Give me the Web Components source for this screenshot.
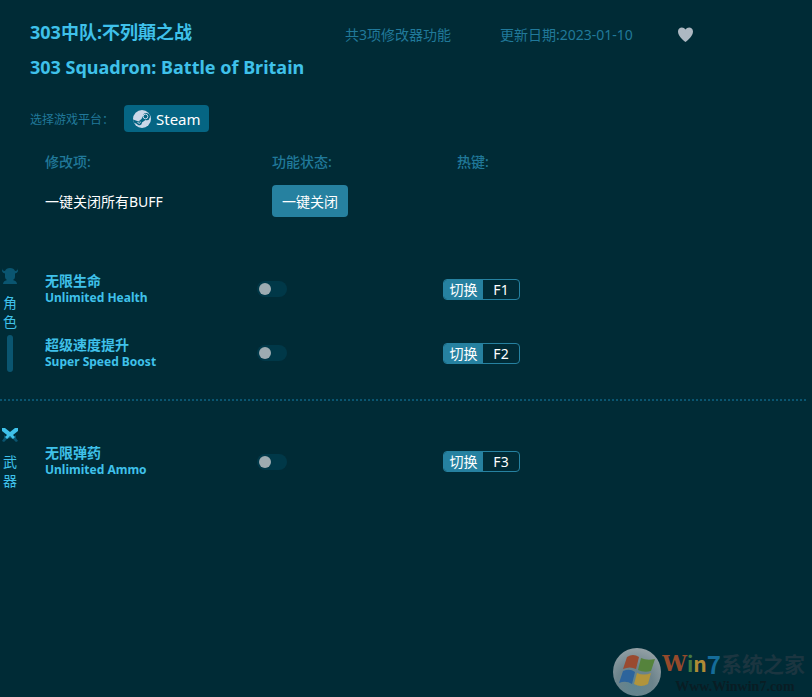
<!DOCTYPE html>
<html lang="zh-CN">
<head>
    <meta charset="UTF-8">
    <title>303中队:不列顛之战</title>
    <style>
        body {
            margin: 0;
            min-height: 100vh;
            background: #002b36;
            color: #3fc1ea;
            font-family: "Noto Sans", "Noto Sans CJK SC", sans-serif;
            font-size: 14px;
            --dim: #20799a;
            --accent: #2681a0;
            --steel: #0a5570;
        }
    </style>
</head>
<body>
<trainer-page>
    <game-header slot="header" count="共3项修改器功能" date="更新日期:2023-01-10">
        <span slot="title">303中队:不列顛之战</span>
        <span slot="subtitle">303 Squadron: Battle of Britain</span>
    </game-header>
    <platform-picker slot="header">Steam</platform-picker>
    <cheat-toolbar slot="header"></cheat-toolbar>

    <cheat-group>
        <svg slot="icon" width="16" height="16" viewBox="0 0 16 16"><path fill="#0a5570" d="M0 0Q0 3 3 3Q4 0 8 0T13 3Q16 3 16 0Q17 5 13 5.500V9Q13 11 11 12Q15 13 15 16H1Q1 13 5 12Q3 11 3 9V5.500Q-1 5 0 0Z"/></svg>
        <span slot="label">角色</span>
        <span slot="bar"></span>
        <cheat-row key="F1">无限生命<span slot="en">Unlimited Health</span></cheat-row>
        <cheat-row key="F2">超级速度提升<span slot="en">Super Speed Boost</span></cheat-row>
    </cheat-group>
    <cheat-group>
        <svg slot="icon" width="16" height="16" viewBox="0 0 16 16">
            <path fill="#0a5570" d="M2 8L5 11L8 9L11 11L14 8L14 11L16 14L14 15L11 12L8 11L5 12L2 15L0 14L2 11Z"/>
            <path fill="#3fc1ea" d="M0 1H3L8 5L13 1H16V4L11 8L13 10L11 12L8 9L5 12L3 10L5 8L0 4Z"/>
        </svg>
        <span slot="label">武器</span>
        <cheat-row key="F3">无限弹药<span slot="en">Unlimited Ammo</span></cheat-row>
    </cheat-group>

    <site-mark slot="mark"></site-mark>
</trainer-page>

<template id="page">
    <style>
        :host { display: block; position: relative; min-height: 100vh; box-sizing: border-box; }
        header { padding: 19px 30px 0; }
        main { padding-top: 40px; }
        ::slotted(site-mark) { position: absolute; right: 7px; bottom: 1px; }
    </style>
    <header><slot name="header"></slot></header>
    <main><slot></slot></main>
    <slot name="mark"></slot>
</template>

<template id="header">
    <style>
        :host { display: flex; align-items: flex-start; }
        .titles { flex: 0 0 315px; white-space: nowrap; }
        h1, h2 { margin: 0 0 9px; font-size: 18px; line-height: 26px; font-weight: bold; }
        .meta { color: var(--dim); line-height: 32px; white-space: nowrap; }
        .count { flex: 0 0 155px; }
        .date { flex: 0 0 178px; }
        button { margin: 8px 0 0; padding: 0; border: 0; background: none; line-height: 0; }
    </style>
    <div class="titles">
        <h1><slot name="title"></slot></h1>
        <h2><slot name="subtitle"></slot></h2>
    </div>
    <span class="meta count"></span>
    <span class="meta date"></span>
    <button aria-label="收藏">
        <svg width="15" height="15" viewBox="0 0 15 15"><path fill="#adb8c2" d="M7.500 15C5 13 0 9 0 4.500C0 0 5.500-1 7.500 2.500C9.500-1 15 0 15 4.500C15 9 10 13 7.500 15Z"/></svg>
    </button>
</template>

<template id="platform">
    <style>
        :host { display: flex; align-items: center; gap: 17px; margin-top: 16px; }
        .caption { width: 77px; color: var(--dim); font-size: 12px; white-space: nowrap; }
        button {
            display: flex; align-items: center; gap: 5px; height: 27px; padding: 0 8px 0 9px;
            border: 0; border-radius: 4px; background: #056583; color: #fff; font: inherit; font-size: 15px; line-height: 24px;
        }
    </style>
    <span class="caption">选择游戏平台：</span>
    <button>
        <svg width="18" height="18" viewBox="0 0 18 18">
            <circle cx="9" cy="9" r="9" fill="#cbd8e9"/>
            <path d="M0 9.500L5.500 11.500L8.500 9L10 6A3.500 3.500 0 1 1 12.500 10L9 12.500A2.700 2.700 0 0 1 4 14L0.700 12.500Z" fill="#056583"/>
            <circle cx="12.500" cy="6.500" r="2.300" fill="none" stroke="#cbd8e9" stroke-width="1"/>
            <path d="M4.500 12.500L6.500 13.300A1.200 1.200 0 0 0 7 11.500" fill="none" stroke="#cbd8e9" stroke-width="1"/>
        </svg>
        <slot></slot>
    </button>
</template>

<template id="toolbar">
    <style>
        :host {
            display: grid; grid-template-columns: 227px 185px 1fr; align-items: center;
            margin: 19px 0 0 15px; row-gap: 13px;
        }
        .head { color: var(--dim); font-size: 14px; font-weight: 500; line-height: 21px; }
        .all { color: #fff; }
        button {
            justify-self: start; height: 32px; padding: 0 10px; border: 0; border-radius: 4px;
            background: var(--accent); color: #fff; font: inherit;
        }
    </style>
    <span class="head">修改项:</span>
    <span class="head">功能状态:</span>
    <span class="head">热键:</span>
    <span class="all">一键关闭所有BUFF</span>
    <button>一键关闭</button>
</template>

<template id="group">
    <style>
        :host { display: flex; align-items: center; }
        :host(:not(:last-of-type)) {
            padding-bottom: 14px;
        }
        :host(:not(:first-of-type)) {
            padding-top: 28px;
            margin-right: 6px;
            background: repeating-linear-gradient(90deg, var(--steel) 0 2px, transparent 2px 4px) 0 0 / 100% 2px no-repeat;
        }
        .side {
            display: flex; flex-direction: column; align-items: center;
            flex: 0 0 20px; padding-bottom: 2px;
        }
        .label { width: 14px; margin: 9px 0 4px; line-height: 19px; word-break: break-all; }
        .rows { flex: 1; }
        ::slotted([slot=icon]) { display: block; }
        ::slotted([slot=bar]) { width: 6px; height: 37px; border-radius: 3px; background: var(--steel); }
    </style>
    <div class="side">
        <slot name="icon"></slot>
        <div class="label"><slot name="label"></slot></div>
        <slot name="bar"></slot>
    </div>
    <div class="rows"><slot></slot></div>
</template>

<template id="row">
    <style>
        :host {
            display: grid; grid-template-columns: 212px 186px 1fr; align-items: center;
            height: 64px; padding-left: 25px;
        }
        label { display: block; font-weight: bold; line-height: 17px; }
        small { display: block; font-size: 12px; line-height: 18px; }
        input {
            appearance: none; width: 30px; height: 16px; margin: 0; padding: 2px;
            border-radius: 8px; background: #003848;
        }
        input::before { content: ""; display: block; width: 12px; height: 12px; border-radius: 50%; background: #9dabb1; }
        input:checked::before { margin-left: auto; background: #3fc1ea; }
        button {
            display: flex; justify-self: start; padding: 0; border: 1px solid var(--accent); border-radius: 4px;
            background: none; color: #fff; font: inherit; line-height: 19px; overflow: hidden;
        }
        .mode { width: 39px; background: var(--accent); }
        .key { width: 36px; }
    </style>
    <label for="on"><slot></slot><small><slot name="en"></slot></small></label>
    <input id="on" type="checkbox" role="switch">
    <button><span class="mode">切换</span><span class="key"></span></button>
</template>

<template id="mark">
    <style>
        :host { display: flex; align-items: center; white-space: nowrap; font-weight: bold; color: #1b3540; }
        .name { display: flex; align-items: center; height: 29px; font: bold 21px/29px "Noto Sans CJK SC", sans-serif; }
        .w { font: bold 22px/29px "DejaVu Serif", serif; color: #964a2b; }
        .i { color: #447b43; }
        .n { color: #b08b35; }
        .seven { color: #156c99; font-size: 24px; }
        .url { font: bold 14px/18px "Liberation Serif", serif; color: #091d24; padding-left: 13px; }
    </style>
    <svg width="49" height="48" viewBox="0 0 49 48">
        <defs>
            <radialGradient id="orb" cx="45%" cy="75%" r="75%">
                <stop offset="0" stop-color="#5c8490"/>
                <stop offset="0.500" stop-color="#6c838b"/>
                <stop offset="1" stop-color="#93a0a5"/>
            </radialGradient>
        </defs>
        <circle cx="24" cy="24" r="24" fill="url(#orb)"/>
        <path fill="#9a4a30" d="M14 9Q20 5 26 9L23 21Q17 18 10 21Z"/>
        <path fill="#55833c" d="M28 10Q34 13 42 11L38 23Q31 25 25 22Z"/>
        <path fill="#2d649c" d="M10 23Q17 20 22 24L19 36Q13 32 6 35Z"/>
        <path fill="#b1943c" d="M24 25Q31 28 38 25L35 36Q28 40 21 36Z"/>
    </svg>
    <div>
        <div class="name"><span class="w">W</span><span class="i">i</span><span class="n">n</span><span class="seven">7</span><span>系统之家</span></div>
        <div class="url">Www.Winwin7.com</div>
    </div>
</template>

<script>
    // every element stamps its own template into an open shadow root
    class Stamped extends HTMLElement {
        constructor(id) {
            super();
            const t = document.getElementById(id);
            this.attachShadow({mode: 'open'}).appendChild(t.content.cloneNode(true));
        }
    }

    customElements.define('trainer-page', class extends Stamped {
        constructor() { super('page'); }
    });

    customElements.define('game-header', class extends Stamped {
        constructor() { super('header'); }
        connectedCallback() {
            this.shadowRoot.querySelector('.count').textContent = this.getAttribute('count');
            this.shadowRoot.querySelector('.date').textContent = this.getAttribute('date');
        }
    });

    customElements.define('platform-picker', class extends Stamped {
        constructor() { super('platform'); }
    });

    customElements.define('cheat-group', class extends Stamped {
        constructor() { super('group'); }
    });

    customElements.define('cheat-row', class extends Stamped {
        constructor() { super('row'); }
        connectedCallback() {
            const root = this.shadowRoot;
            root.querySelector('.key').textContent = this.getAttribute('key');
            // the hotkey button flips the switch
            root.querySelector('button').onclick = () => root.querySelector('input').click();
        }
    });

    customElements.define('cheat-toolbar', class extends Stamped {
        constructor() { super('toolbar'); }
        connectedCallback() {
            this.shadowRoot.querySelector('button').onclick = () => {
                document.querySelectorAll('cheat-row').forEach(row => {
                    row.shadowRoot.querySelector('input').checked = false;
                });
            };
        }
    });

    customElements.define('site-mark', class extends Stamped {
        constructor() { super('mark'); }
    });
</script>
</body>
</html>
